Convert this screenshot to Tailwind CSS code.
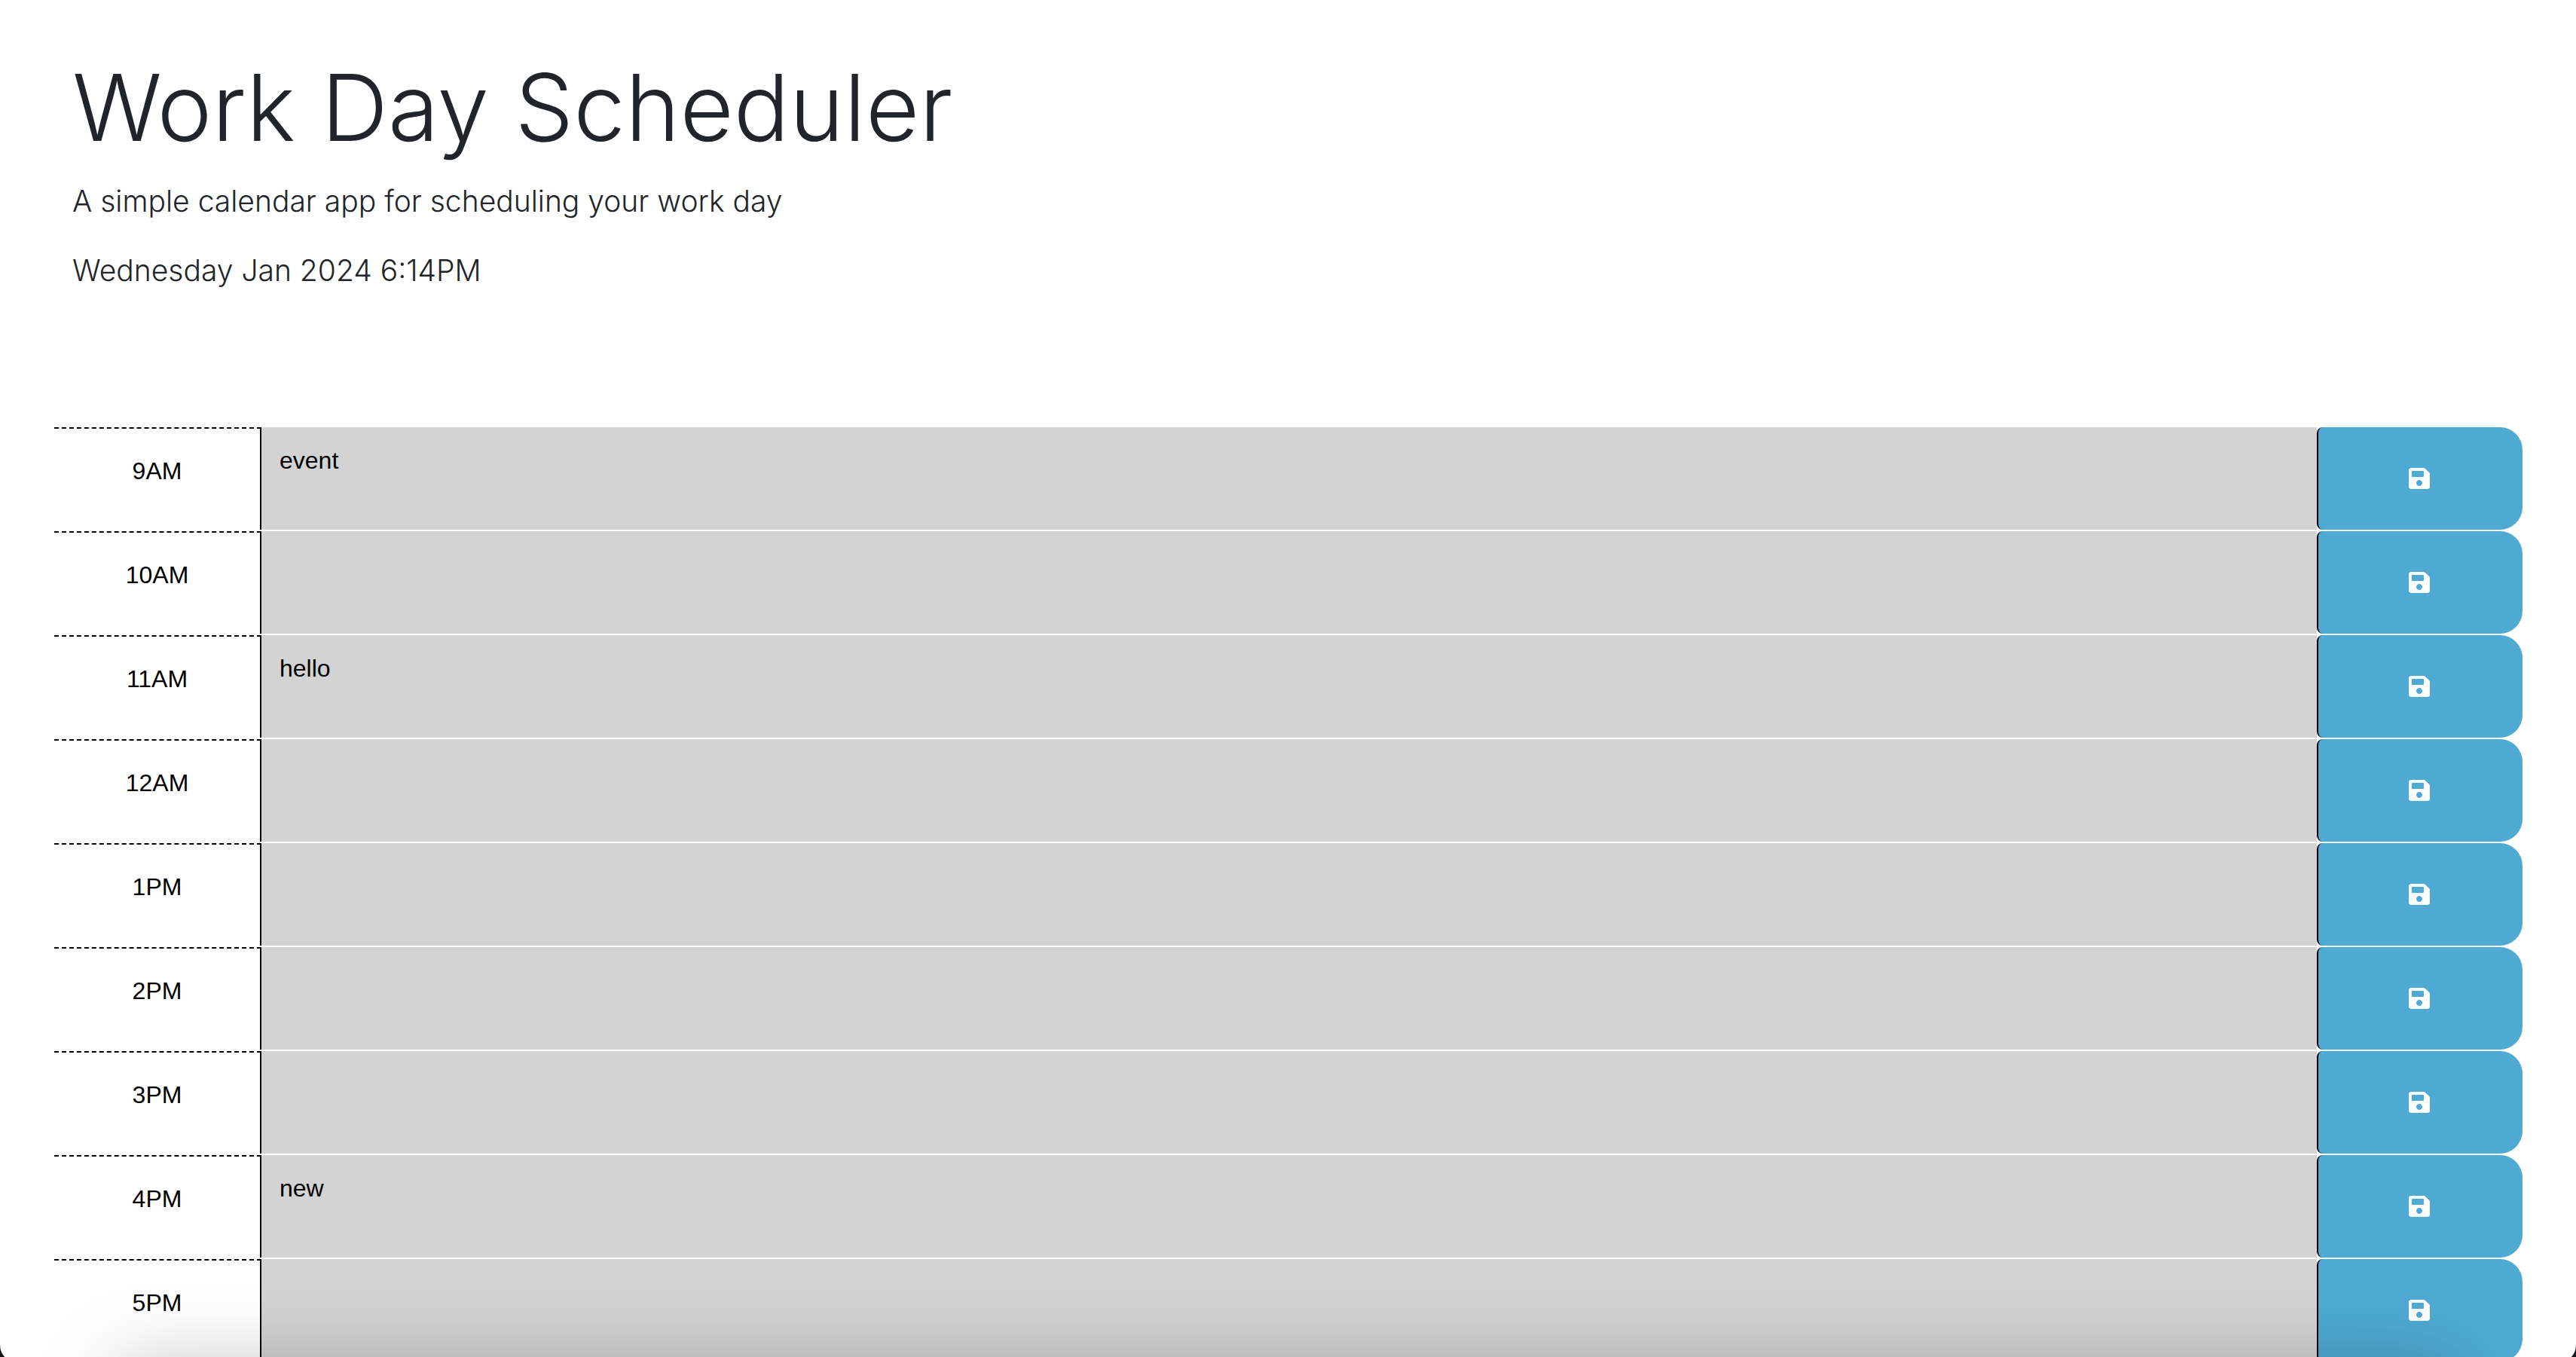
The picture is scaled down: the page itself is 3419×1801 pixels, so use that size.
<!DOCTYPE html>
<html lang="en">
<head>
<meta charset="utf-8">
<meta name="viewport" content="width=device-width, initial-scale=1">
<title>Work Day Scheduler</title>
<script src="https://cdn.jsdelivr.net/npm/@tailwindcss/browser@4"></script>
</head>
<body class="h-screen overflow-hidden bg-white font-['Liberation_Sans',Arial,sans-serif] text-[32px] leading-[48px] text-black">
<svg class="hidden" aria-hidden="true">
  <symbol id="save" viewBox="0 0 448 512"><path d="M433.941 129.941l-83.882-83.882A48 48 0 0 0 316.118 32H48C21.49 32 0 53.49 0 80v352c0 26.51 21.49 48 48 48h352c26.51 0 48-21.49 48-48V163.882a48 48 0 0 0-14.059-33.941zM224 416c-35.346 0-64-28.654-64-64 0-35.346 28.654-64 64-64s64 28.654 64 64c0 35.346-28.654 64-64 64zm96-304.52V212c0 6.627-5.373 12-12 12H76c-6.627 0-12-5.373-12-12V108c0-6.627 5.373-12 12-12h228.52c3.183 0 6.235 1.264 8.485 3.515l3.48 3.48A11.996 11.996 0 0 1 320 111.48z"/></symbol>
</svg>

<header class="px-24 pt-[65px] pb-[178px] font-[Inter,sans-serif] font-light text-[#212529]">
  <h1 class="text-[123px] leading-[156px]">Work Day Scheduler</h1>
  <p class="mt-4 text-[39px] leading-[60px]">A simple calendar app for scheduling your work day</p>
  <p class="mt-8 text-[39px] leading-[60px]">Wednesday Jan 2024 6:14PM</p>
</header>

<main id="rows" class="flex flex-col gap-0.5 pr-[71px] pl-[72px]"></main>

<!-- soft shade along the bottom edge of the window -->
<div class="pointer-events-none fixed inset-x-40 top-full mt-4 h-40 shadow-[0_0_110px_rgba(0,0,0,0.27)]"></div>
<!-- rounded window corners -->
<div class="pointer-events-none fixed inset-x-0 top-0 -bottom-2 rounded-b-3xl shadow-[0_0_0_40px_#18161a]"></div>

<script>
const events = { '9AM': 'event', '11AM': 'hello', '4PM': 'new' };
const hours = ['9AM', '10AM', '11AM', '12AM', '1PM', '2PM', '3PM', '4PM', '5PM'];
document.getElementById('rows').innerHTML = hours.map(h => `
  <div class="flex h-[136px]">
    <label for="t-${h}" class="w-[275px] shrink-0 border-t-2 border-r-2 border-t-black border-r-black [border-top-style:dashed] pt-8 text-center">${h}</label>
    <textarea id="t-${h}" class="block min-w-0 flex-1 resize-none overflow-hidden bg-[#d3d3d3] px-6 py-5 outline-none">${events[h] || ''}</textarea>
    <button type="button" aria-label="Save ${h}" class="flex w-[273px] shrink-0 items-center justify-center rounded-l-lg rounded-r-[30px] border-l-2 border-black bg-[#4faad3] pr-1 text-white">
      <svg class="h-8 w-7 fill-current" aria-hidden="true"><use href="#save"/></svg>
    </button>
  </div>`).join('');
</script>
</body>
</html>
